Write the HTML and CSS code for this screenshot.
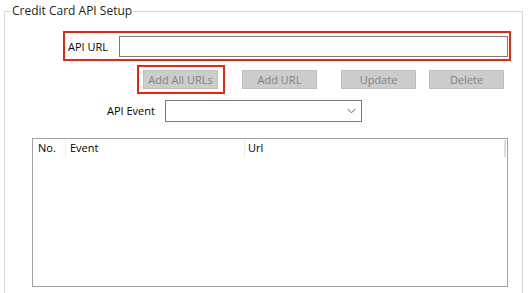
FILE: index.html
```html
<!DOCTYPE html>
<html>
<head>
<meta charset="utf-8">
<link rel="stylesheet" href="styles.css">
</head>
<body>
<fieldset class="group">
  <legend class="group-title">Credit Card API Setup</legend>
  <div class="url-row highlight">
    <label class="url-label">API URL</label>
    <div class="url-input"></div>
  </div>
  <div class="button-row">
    <div class="highlight btn-wrap">
      <button class="btn" disabled>Add All URLs</button>
    </div>
    <button class="btn btn-add" disabled>Add URL</button>
    <button class="btn btn-update" disabled>Update</button>
    <button class="btn btn-delete" disabled>Delete</button>
  </div>
  <div class="event-row">
    <label class="event-label">API Event</label>
    <div class="combo">
      <svg class="chevron" width="9" height="6" viewBox="0 0 9 6"><path d="M0.5 0.8 L4.5 4.8 L8.5 0.8" fill="none" stroke="#606060" stroke-width="1"/></svg>
    </div>
  </div>
  <div class="list">
    <div class="list-header">
      <div class="col col-no">No.</div>
      <div class="col col-event">Event</div>
      <div class="col col-url">Url</div>
      <div class="header-edge"></div>
    </div>
  </div>
</fieldset>
</body>
</html>
```
FILE: styles.css
```css
html, body {
  margin: 0;
  padding: 0;
  background: #ffffff;
  overflow: hidden;
}
body {
  width: 531px;
  height: 293px;
  font-family: "Open Sans", "Noto Sans", sans-serif;
  font-size: 11px;
  color: #000;
}
.group {
  box-sizing: border-box;
  margin: 3px 0 0 4px;
  padding: 0;
  width: 519px;
  height: 300px;
  border: 1px solid #d9d9d9;
  min-width: 0;
}
.group-title {
  margin-left: 6px;
  padding: 0 1px;
  line-height: 16px;
  font-size: 12px;
  color: #1e1e1e;
}
.highlight {
  box-sizing: border-box;
  border: 2px solid #f5200d;
}
.url-row {
  display: flex;
  align-items: flex-start;
  margin: 12px 0 0 58px;
  width: 448px;
  height: 30px;
  padding-top: 3px;
}
.url-label {
  width: 51px;
  padding-left: 3px;
  line-height: 21px;
}
.url-input {
  box-sizing: border-box;
  width: 389px;
  height: 21px;
  border: 1px solid #7a7a7a;
  background: #fff;
}
.button-row {
  display: flex;
  align-items: center;
  margin: 4px 0 0 132px;
  height: 29px;
}
.btn-wrap {
  width: 88px;
  height: 29px;
  padding: 3px 5px 0 4px;
}
.btn {
  box-sizing: border-box;
  width: 75px;
  height: 19px;
  margin: 0;
  padding: 0;
  border: 1px solid #bfbfbf;
  background: #cccccc;
  color: #838383;
  font-family: inherit;
  font-size: 11px;
  line-height: 17px;
}
.btn-add { margin-left: 17px; }
.btn-update { margin-left: 24px; }
.btn-delete { margin-left: 13px; }
.event-row {
  display: flex;
  align-items: center;
  margin: 6px 0 0 102px;
  height: 22px;
}
.event-label {
  width: 58px;
  line-height: 20px;
}
.combo {
  box-sizing: border-box;
  width: 197px;
  height: 22px;
  border: 1px solid #7a7a7a;
  background: #fff;
  display: flex;
  align-items: center;
  justify-content: flex-end;
  padding-right: 5px;
}
.list {
  box-sizing: border-box;
  margin: 16px 0 0 27px;
  width: 476px;
  height: 149px;
  border: 1px solid #a0a0a0;
  background: #fff;
}
.list-header {
  position: relative;
  display: flex;
  height: 21px;
  align-items: flex-start;
}
.col {
  box-sizing: border-box;
  height: 19px;
  line-height: 18px;
  padding-left: 5px;
}
.col-no { width: 32px; }
.col-event { width: 179px; border-left: 1px solid #ececec; padding-left: 4px; }
.col-url { flex: 1; border-left: 1px solid #ececec; padding-left: 3px; }
.header-edge {
  position: absolute;
  right: 1px;
  top: 1px;
  width: 2px;
  height: 17px;
  background: #dcdcdc;
}
```
